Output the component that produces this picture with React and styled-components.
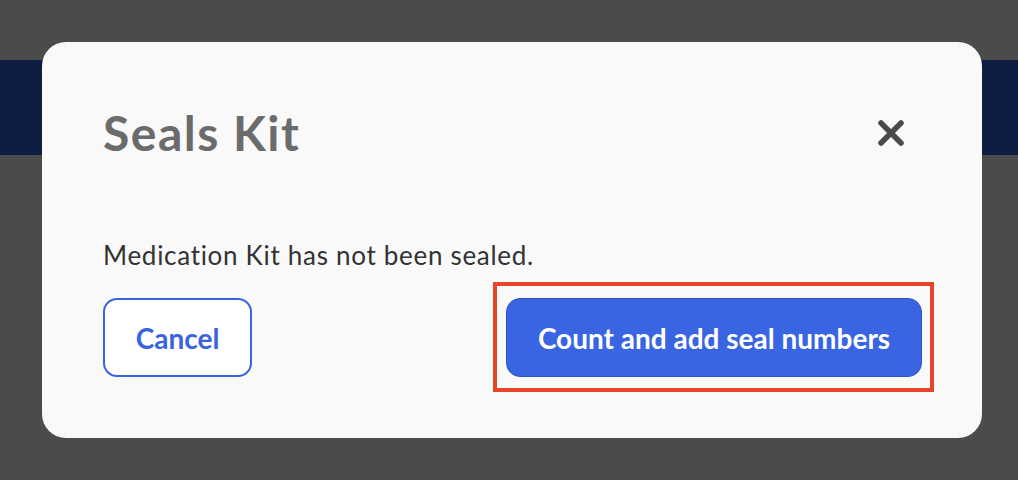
import React from "react";
import styled, { createGlobalStyle } from "styled-components";

const GlobalStyle = createGlobalStyle`
  html, body {
    margin: 0;
    padding: 0;
    background: #4b4b4b;
    font-family: "Lato", "Liberation Sans", sans-serif;
  }
`;

const Page = styled.div`
  position: relative;
  width: 1018px;
  height: 480px;
  overflow: hidden;
  background: #4b4b4b;
`;

const NavBar = styled.div`
  margin-top: 60px;
  height: 95px;
  background: #0f1d45;
`;

const Overlay = styled.div`
  position: absolute;
  inset: 0;
  display: flex;
  padding: 42px 36px 42px 42px;
`;

const Modal = styled.div`
  flex: 1;
  display: flex;
  flex-direction: column;
  background: #f9f9f9;
  border-radius: 24px;
  padding: 0 60px 0 61px;
`;

const Header = styled.div`
  display: flex;
  align-items: center;
  justify-content: space-between;
  margin-top: 62px;
  padding-right: 17px;
`;

const Title = styled.h2`
  margin: 0;
  font-size: 48px;
  line-height: 58px;
  font-weight: 700;
  letter-spacing: 1.5px;
  color: #6b6b6b;
`;

const CloseButton = styled.button`
  display: flex;
  align-items: center;
  justify-content: center;
  width: 28px;
  height: 28px;
  padding: 0;
  border: none;
  background: none;
  cursor: pointer;
`;

const Message = styled.p`
  margin: 78px 0 0;
  font-size: 26px;
  line-height: 30px;
  letter-spacing: 0.7px;
  color: #333333;
`;

const Actions = styled.div`
  display: flex;
  align-items: flex-start;
  justify-content: space-between;
  margin-top: 12px;
  margin-right: -12px;
`;

const Button = styled.button`
  height: 79px;
  padding: 0;
  border-radius: 14px;
  border: ${(p) => (p.$primary ? "1px solid #2f55c9" : "2px solid #3a63e0")};
  background: ${(p) => (p.$primary ? "#3964e2" : "#ffffff")};
  color: ${(p) => (p.$primary ? "#ffffff" : "#3a63e0")};
  font-family: "Lato", "Liberation Sans", sans-serif;
  font-size: 28px;
  font-weight: 700;
  cursor: pointer;
`;

const CancelButton = styled(Button)`
  width: 149px;
  margin-top: 16px;
`;

const PrimaryButton = styled(Button)`
  width: 416px;
`;

const Highlight = styled.div`
  border: 4px solid #e8442a;
  padding: 12px 8px 11px 9px;
`;

function CloseIcon() {
  return (
    <svg width="28" height="28" viewBox="0 0 28 28">
      <path
        d="M4 4 L24 24 M24 4 L4 24"
        stroke="#4a4a4a"
        strokeWidth="5.5"
        strokeLinecap="round"
      />
    </svg>
  );
}

export default function App() {
  return (
    <Page>
      <GlobalStyle />
      <NavBar />
      <Overlay>
        <Modal>
          <Header>
            <Title>Seals Kit</Title>
            <CloseButton aria-label="Close">
              <CloseIcon />
            </CloseButton>
          </Header>
          <Message>Medication Kit has not been sealed.</Message>
          <Actions>
            <CancelButton>Cancel</CancelButton>
            <Highlight>
              <PrimaryButton $primary>Count and add seal numbers</PrimaryButton>
            </Highlight>
          </Actions>
        </Modal>
      </Overlay>
    </Page>
  );
}
